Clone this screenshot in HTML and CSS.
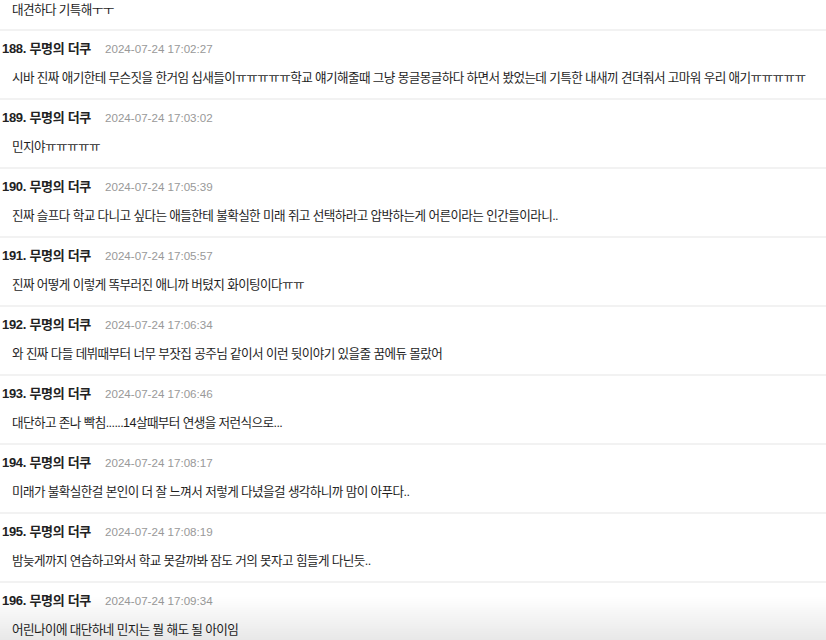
FILE: index.html
```html
<!DOCTYPE html>
<html lang="ko">
<head>
<meta charset="utf-8">
<link rel="stylesheet" href="styles.css">
</head>
<body>
<div class="list">
  <div class="comment first"><p class="body">대견하다 기특해ㅜㅜ</p></div>
  <div class="comment"><div class="head"><span class="name">188. 무명의 더쿠</span><span class="date">2024-07-24 17:02:27</span></div><p class="body">시바 진짜 애기한테 무슨짓을 한거임 십새들이ㅠㅠㅠㅠㅠ학교 얘기해줄때 그냥 몽글몽글하다 하면서 봤었는데 기특한 내새끼 견뎌줘서 고마워 우리 애기ㅠㅠㅠㅠㅠ</p></div>
  <div class="comment"><div class="head"><span class="name">189. 무명의 더쿠</span><span class="date">2024-07-24 17:03:02</span></div><p class="body">민지야ㅠㅠㅠㅠㅠ</p></div>
  <div class="comment"><div class="head"><span class="name">190. 무명의 더쿠</span><span class="date">2024-07-24 17:05:39</span></div><p class="body">진짜 슬프다 학교 다니고 싶다는 애들한테 불확실한 미래 쥐고 선택하라고 압박하는게 어른이라는 인간들이라니..</p></div>
  <div class="comment"><div class="head"><span class="name">191. 무명의 더쿠</span><span class="date">2024-07-24 17:05:57</span></div><p class="body">진짜 어떻게 이렇게 똑부러진 애니까 버텼지 화이팅이다ㅠㅠ</p></div>
  <div class="comment"><div class="head"><span class="name">192. 무명의 더쿠</span><span class="date">2024-07-24 17:06:34</span></div><p class="body">와 진짜 다들 데뷔때부터 너무 부잣집 공주님 같이서 이런 뒷이야기 있을줄 꿈에듀 몰랐어</p></div>
  <div class="comment"><div class="head"><span class="name">193. 무명의 더쿠</span><span class="date">2024-07-24 17:06:46</span></div><p class="body">대단하고 존나 빡침......14살때부터 연생을 저런식으로...</p></div>
  <div class="comment"><div class="head"><span class="name">194. 무명의 더쿠</span><span class="date">2024-07-24 17:08:17</span></div><p class="body">미래가 불확실한걸 본인이 더 잘 느껴서 저렇게 다녔을걸 생각하니까 맘이 아푸다..</p></div>
  <div class="comment"><div class="head"><span class="name">195. 무명의 더쿠</span><span class="date">2024-07-24 17:08:19</span></div><p class="body">밤늦게까지 연습하고와서 학교 못갈까봐 잠도 거의 못자고 힘들게 다닌듯..</p></div>
  <div class="comment"><div class="head"><span class="name">196. 무명의 더쿠</span><span class="date">2024-07-24 17:09:34</span></div><p class="body">어린나이에 대단하네 민지는 뭘 해도 될 아이임</p></div>
</div>
<div class="fade"></div>
</body>
</html>
```
FILE: styles.css
```css
html, body {
  margin: 0;
  padding: 0;
  background: #fff;
}
body {
  font-family: "Liberation Sans", "Noto Sans CJK KR", sans-serif;
  color: #222;
  overflow: hidden;
  height: 640px;
}
.list {
  display: flex;
  flex-direction: column;
}
.comment {
  border-top: 2px solid #f2f2f2;
  padding: 8px 0 10px 2px;
  display: flex;
  flex-direction: column;
  gap: 9px;
}
.comment.first {
  border-top: none;
  padding-top: 0;
  padding-bottom: 9px;
}
.head {
  display: flex;
  align-items: baseline;
  height: 20px;
  line-height: 20px;
}
.name {
  font-weight: bold;
  font-size: 13px;
  letter-spacing: -0.3px;
  color: #222;
}
.date {
  margin-left: 14px;
  font-size: 11.6px;
  color: #999;
}
.body {
  margin: 0 0 0 10px;
  font-size: 12.6px;
  line-height: 20px;
  white-space: nowrap;
  letter-spacing: -0.6px;
  color: #1e1e1e;
}
.fade {
  position: fixed;
  left: 0;
  right: 0;
  bottom: 0;
  height: 44px;
  background: linear-gradient(to bottom, rgba(0,0,0,0), rgba(0,0,0,0.09));
  pointer-events: none;
}
```
